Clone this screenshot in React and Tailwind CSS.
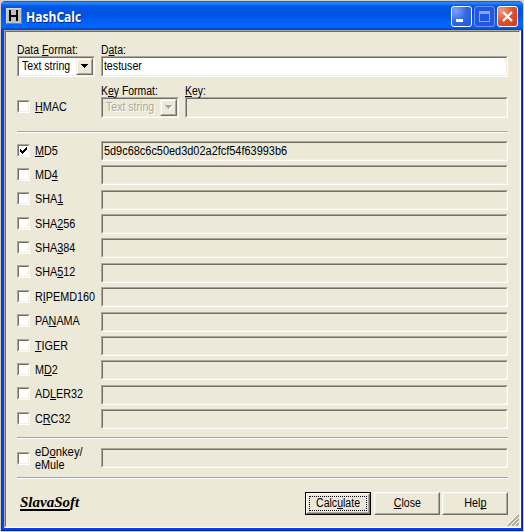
import React from 'react';

const ROWS = [
  ['', 'M', 'D5', 'h-[24px]', 'pt-[3px]'],
  ['MD', '4', '', 'h-[25px]', 'pt-[3px]'],
  ['SHA', '1', '', 'h-[24px]', 'pt-[2px]'],
  ['SHA', '2', '56', 'h-[24px]', 'pt-[3px]'],
  ['SHA', '3', '84', 'h-[25px]', 'pt-[3px]'],
  ['SHA', '5', '12', 'h-[24px]', 'pt-[2px]'],
  ['R', 'I', 'PEMD160', 'h-[25px]', 'pt-[3px]'],
  ['PA', 'N', 'AMA', 'h-[24px]', 'pt-[2px]'],
  ['', 'T', 'IGER', 'h-[24px]', 'pt-[3px]'],
  ['M', 'D', '2', 'h-[25px]', 'pt-[3px]'],
  ['AD', 'L', 'ER32', 'h-[24px]', 'pt-[2px]'],
  ['C', 'R', 'C32', 'h-[28px]', 'pt-[3px]'],
];

function Label({ a = '', u = '', b = '', scale = 'scale-x-[0.9]', origin = 'origin-left', className = '' }) {
  return (
    <span className={`inline-block whitespace-pre leading-[13px] ${origin} ${scale} ${className}`}>
      {a}
      <span className="underline decoration-1 underline-offset-[1px] [text-decoration-skip-ink:none]">{u}</span>
      {b}
    </span>
  );
}

function Caption(props) {
  return (
    <div className="flex h-[13px] items-start pt-px">
      <Label {...props} scale="scale-x-[0.87]" />
    </div>
  );
}

function Sunken({ className = '', children }) {
  return (
    <div className={`border border-t-[#aca899] border-l-[#aca899] border-r-white border-b-white ${className}`}>
      <div className="flex h-full w-full items-center border border-t-[#716f64] border-l-[#716f64] border-r-[#f1efe2] border-b-[#f1efe2]">
        {children}
      </div>
    </div>
  );
}

function Check({ checked }) {
  return (
    <Sunken className="h-[13px] w-[13px] shrink-0 bg-white">
      {checked && (
        <svg width="9" height="9" viewBox="0 0 9 9" shapeRendering="crispEdges" className="shrink-0">
          <path d="M1 3h1v1h1v1h1v-1h1v-1h1v-1h1v-1h1v3h-1v1h-1v1h-1v1h-1v1h-1v-1h-1v-1h-1z" fill="#000" />
        </svg>
      )}
    </Sunken>
  );
}

function Select({ disabled }) {
  return (
    <Sunken className={`h-[21px] w-[78px] ${disabled ? '' : 'bg-white'}`}>
      <div className="flex w-[57px] shrink-0 pl-[3px]">
        <Label a="Text string" scale="scale-x-[0.88]" className={disabled ? 'text-[#aca899] [text-shadow:1px_1px_0_#fff]' : ''} />
      </div>
      <div className="h-[17px] w-[17px] shrink-0 border border-t-[#f1efe2] border-l-[#f1efe2] border-r-[#716f64] border-b-[#716f64] bg-[#ece9d8]">
        <div className="flex h-full w-full items-center justify-center border border-t-white border-l-white border-r-[#aca899] border-b-[#aca899]">
          <svg width="8" height="5" viewBox="0 0 8 5" shapeRendering="crispEdges">
            {disabled && <path d="M1 1h7v1h-1v1h-1v1h-1v1h-1v-1h-1v-1h-1v-1h-1z" fill="#fff" />}
            <path d="M0 0h7v1h-1v1h-1v1h-1v1h-1v-1h-1v-1h-1v-1h-1z" fill={disabled ? '#aca899' : '#000'} />
          </svg>
        </div>
      </div>
    </Sunken>
  );
}

function Rule() {
  return <div className="h-[2px] w-[491px] border-t border-b border-t-[#aca899] border-b-white" />;
}

function Push({ children, focus }) {
  return (
    <button className={`h-[23px] w-[66px] bg-[#ece9d8] ${focus ? 'border border-black' : ''}`}>
      <span className="block h-full w-full border border-t-white border-l-white border-r-[#716f64] border-b-[#716f64]">
        <span className={`flex h-full w-full items-center justify-center border border-t-[#f1efe2] border-l-[#f1efe2] border-r-[#aca899] border-b-[#aca899] ${focus ? 'p-px' : ''}`}>
          <span className={`flex h-full w-full items-center justify-center ${focus ? 'border border-dotted border-black' : ''}`}>
            {children}
          </span>
        </span>
      </span>
    </button>
  );
}

const CAPTION = 'flex h-[21px] w-[21px] items-center justify-center rounded-[3px] border';

export default function App() {
  return (
    <div className="h-[532px] w-[524px] overflow-hidden bg-[#d0cfc9] pt-px pl-px font-['Liberation_Sans',Arial,sans-serif] text-[12px] text-black">
      <div className="flex h-[530px] w-[522px] flex-col rounded-t-[5px] bg-[#0046e8] shadow-[inset_-1px_-1px_0_#001ea0,inset_1px_0_0_#0831d9]">
        <header className="flex h-[29px] shrink-0 items-start rounded-t-[5px] bg-[linear-gradient(180deg,#0058e8_0px,#2b90ff_2px,#0a62ee_4px,#0054e3_7px,#0054e3_13px,#005cf5_19px,#0068ff_23px,#0064fa_26px,#0040cc_29px)] pt-[5px] pr-[5px] pl-[5px]">
          <svg width="16" height="16" viewBox="0 0 16 16" className="mt-[2px]" shapeRendering="crispEdges">
            <rect width="16" height="16" fill="#808080" />
            <rect width="15" height="15" fill="#dcdcdc" />
            <rect x="1" y="1" width="14" height="14" fill="#c0c0c0" />
            <path d="M3 2h2v5h5V2h2v11h-2V9H5v4H3z" fill="#000" />
          </svg>
          <span className="mt-[2px] ml-[4px] inline-block origin-left scale-x-[0.86] font-['Open_Sans',sans-serif] text-[14px] leading-[18px] font-bold text-white [text-shadow:1px_1px_1px_#00227a]">
            HashCalc
          </span>
          <div className="ml-auto flex gap-[2px]">
            <div className={`${CAPTION} border-white bg-[radial-gradient(circle_at_20%_20%,#7ea4f5,#3467e8_50%,#1f56e0)]`}>
              <svg width="19" height="19" viewBox="0 0 19 19" shapeRendering="crispEdges"><path d="M4 12h7v3H4z" fill="#fff" /></svg>
            </div>
            <div className={`${CAPTION} border-[#6e94f0] bg-[#2257e2]`}>
              <svg width="19" height="19" viewBox="0 0 19 19" shapeRendering="crispEdges"><path d="M4 4h11v11H4zM5 7v7h9V7z" fill="#8ba5f0" fillRule="evenodd" /></svg>
            </div>
            <div className={`${CAPTION} border-white bg-[radial-gradient(circle_at_20%_20%,#f09a80,#e2512c_50%,#cf3c12)]`}>
              <svg width="19" height="19" viewBox="0 0 19 19"><path d="M5 5l9 9M14 5l-9 9" stroke="#fff" strokeWidth="2.2" /></svg>
            </div>
          </div>
        </header>

        <main className="relative ml-[3px] flex h-[498px] w-[517px] flex-col border border-t-[#aca899] border-l-[#aca899] border-r-white border-b-white bg-[#ece9d8]">
          <div className="flex h-full w-full flex-col border border-t-[#716f64] border-l-[#716f64] border-r-[#f1efe2] border-b-[#f1efe2] pl-[11px]">
            <div className="flex h-[45px] pt-[11px]">
              <div className="w-[84px]">
                <Caption a="Data " u="F" b="ormat:" />
                <Select />
              </div>
              <div className="w-[407px]">
                <Caption a="D" u="a" b="ta:" />
                <Sunken className="h-[21px] bg-white"><Label a="testuser" scale="scale-x-[0.89]" className="pl-px" /></Sunken>
              </div>
            </div>
            <div className="flex h-[54px] pt-[7px]">
              <div className="flex w-[84px] gap-[5px] pt-[16px]"><Check /><Label u="H" b="MAC" className="mt-px" /></div>
              <div className="w-[84px]">
                <Caption a="K" u="e" b="y Format:" />
                <Select disabled />
              </div>
              <div className="w-[323px]">
                <Caption u="K" b="ey:" />
                <Sunken className="h-[21px]" />
              </div>
            </div>
            <Rule />
            <div className="mt-[8px]">
              {ROWS.map(([a, u, b, h, pt], i) => (
                <div key={i} className={`flex ${h}`}>
                  <div className={`flex w-[84px] shrink-0 items-start gap-[5px] ${pt}`}>
                    <Check checked={i === 0} />
                    <Label a={a} u={u} b={b} className="mt-px" />
                  </div>
                  <Sunken className="h-[20px] w-[407px]">
                    {i === 0 && <Label a="5d9c68c6c50ed3d02a2fcf54f63993b6" scale="scale-x-[0.912]" className="pl-px" />}
                  </Sunken>
                </div>
              ))}
            </div>
            <Rule />
            <div className="flex h-[38px] pt-[9px]">
              <div className="flex w-[84px] gap-[5px]">
                <div className="pt-[4px]"><Check /></div>
                <div className="-mt-[2px] flex flex-col">
                  <Label a="eD" u="o" b="nkey/" scale="scale-x-[0.94]" />
                  <Label a="eMule" />
                </div>
              </div>
              <Sunken className="h-[20px] w-[407px]" />
            </div>
            <Rule />
            <div className="flex w-[491px] pt-[13px]">
              <div className="pt-[2px] pl-[3px] font-['Liberation_Serif',serif] text-[15px] leading-[17px] font-bold italic">
                <span className="underline decoration-2 underline-offset-[2px] [text-decoration-skip-ink:none]">SlavaSo</span>ft
              </div>
              <div className="ml-auto flex">
                <Push focus><Label a="Calc" u="u" b="late" origin="origin-center" scale="scale-x-[0.88]" /></Push>
                <div className="ml-[3px] flex gap-[2px]">
                  <Push><Label u="C" b="lose" origin="origin-center" scale="scale-x-[0.88]" /></Push>
                  <Push><Label a="Hel" u="p" origin="origin-center" scale="scale-x-[0.9]" /></Push>
                </div>
              </div>
            </div>
          </div>
          <svg width="12" height="12" viewBox="0 0 12 12" className="absolute right-px bottom-px">
            <path d="M0 11L11 0M4 11L11 4M8 11L11 8" stroke="#fff" />
            <path d="M1 12L12 1M5 12L12 5M9 12L12 9" stroke="#aca899" strokeWidth="1.8" />
          </svg>
        </main>
      </div>
    </div>
  );
}
